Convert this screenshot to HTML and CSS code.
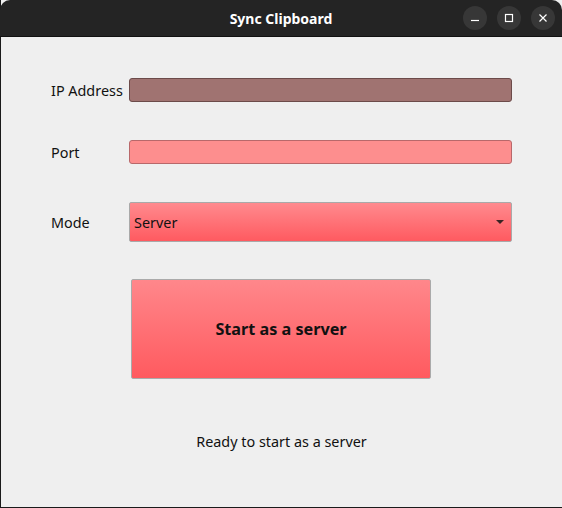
FILE: index.html
```html
<!DOCTYPE html>
<html>
<head>
<meta charset="utf-8">
<link rel="stylesheet" href="styles.css">
</head>
<body>
<div class="window">
  <div class="titlebar">
    <div class="title">Sync Clipboard</div>
    <div class="controls">
      <span class="ctl"><svg width="10" height="10" viewBox="0 0 10 10"><path d="M1 7.5h8" stroke="#fff" stroke-width="1.2"/></svg></span>
      <span class="ctl"><svg width="10" height="10" viewBox="0 0 10 10"><rect x="1.5" y="1.5" width="7" height="7" fill="none" stroke="#fff" stroke-width="1.2"/></svg></span>
      <span class="ctl"><svg width="10" height="10" viewBox="0 0 10 10"><path d="M1.5 1.5l7 7M8.5 1.5l-7 7" stroke="#fff" stroke-width="1.2"/></svg></span>
    </div>
  </div>
  <div class="content">
    <div class="row row-ip">
      <label class="lbl">IP Address</label>
      <div class="field field-ip"></div>
    </div>
    <div class="row row-port">
      <label class="lbl">Port</label>
      <div class="field field-port"></div>
    </div>
    <div class="row row-mode">
      <label class="lbl">Mode</label>
      <div class="combo"><span>Server</span><span class="arrow"></span></div>
    </div>
    <div class="btn-row">
      <div class="btn">Start as a server</div>
    </div>
    <div class="status">Ready to start as a server</div>
  </div>
</div>
</body>
</html>
```
FILE: styles.css
```css
* { box-sizing: border-box; }
html, body { margin: 0; padding: 0; background: #efefef; }
body { font-family: "Noto Sans", "Open Sans", sans-serif; font-size: 14.4px; color: #111; }
.window {
  width: 562px; height: 508px;
  display: flex; flex-direction: column;
  border-left: 1px solid #1a1a1a; border-bottom: 1px solid #1a1a1a;
  background: #efefef;
}
.titlebar {
  height: 37px; background: #242424; border-radius: 10px 10px 0 0;
  position: relative; display: flex; align-items: center; justify-content: center;
  margin: 0 0 0 -1px; border-bottom: 1px solid #111;
}
.title { color: #fff; font-weight: bold; font-size: 14px; }
.controls { position: absolute; right: 7px; top: 6px; display: flex; gap: 10px; }
.ctl {
  width: 24px; height: 24px; border-radius: 50%; background: #373737;
  display: flex; align-items: center; justify-content: center;
}
.content { flex: 1; padding: 41px 50px 0 50px; display: flex; flex-direction: column; }
.row { display: flex; align-items: center; }
.lbl { width: 78px; white-space: nowrap; }
.field { flex: 1; height: 24px; border-radius: 3px; }
.field-ip { background: #a07371; border: 1px solid #6c4b4a; }
.row-port { margin-top: 38px; }
.field-port { background: #fd8e8e; border: 1px solid #b8686a; height: 24px; }
.row-mode { margin-top: 38px; }
.combo {
  flex: 1; height: 40px; border: 1px solid #a9a9a9; border-radius: 2px;
  background: linear-gradient(#ff8a8e, #ff5a60);
  display: flex; align-items: center; justify-content: space-between;
  padding: 0 7px 0 4px;
}
.arrow { width: 0; height: 0; border-left: 4px solid transparent; border-right: 4px solid transparent; border-top: 4px solid #3a2424; }
.btn-row { margin-top: 37px; padding-left: 80px; }
.btn {
  width: 300px; height: 100px; border: 1px solid #aaa; border-radius: 2px;
  background: linear-gradient(#ff878b, #ff5a5f);
  display: flex; align-items: center; justify-content: center;
  font-weight: bold; font-size: 16.2px;
}
.status { margin-top: 53px; text-align: center; margin-left: -50px; margin-right: -50px; }
```
